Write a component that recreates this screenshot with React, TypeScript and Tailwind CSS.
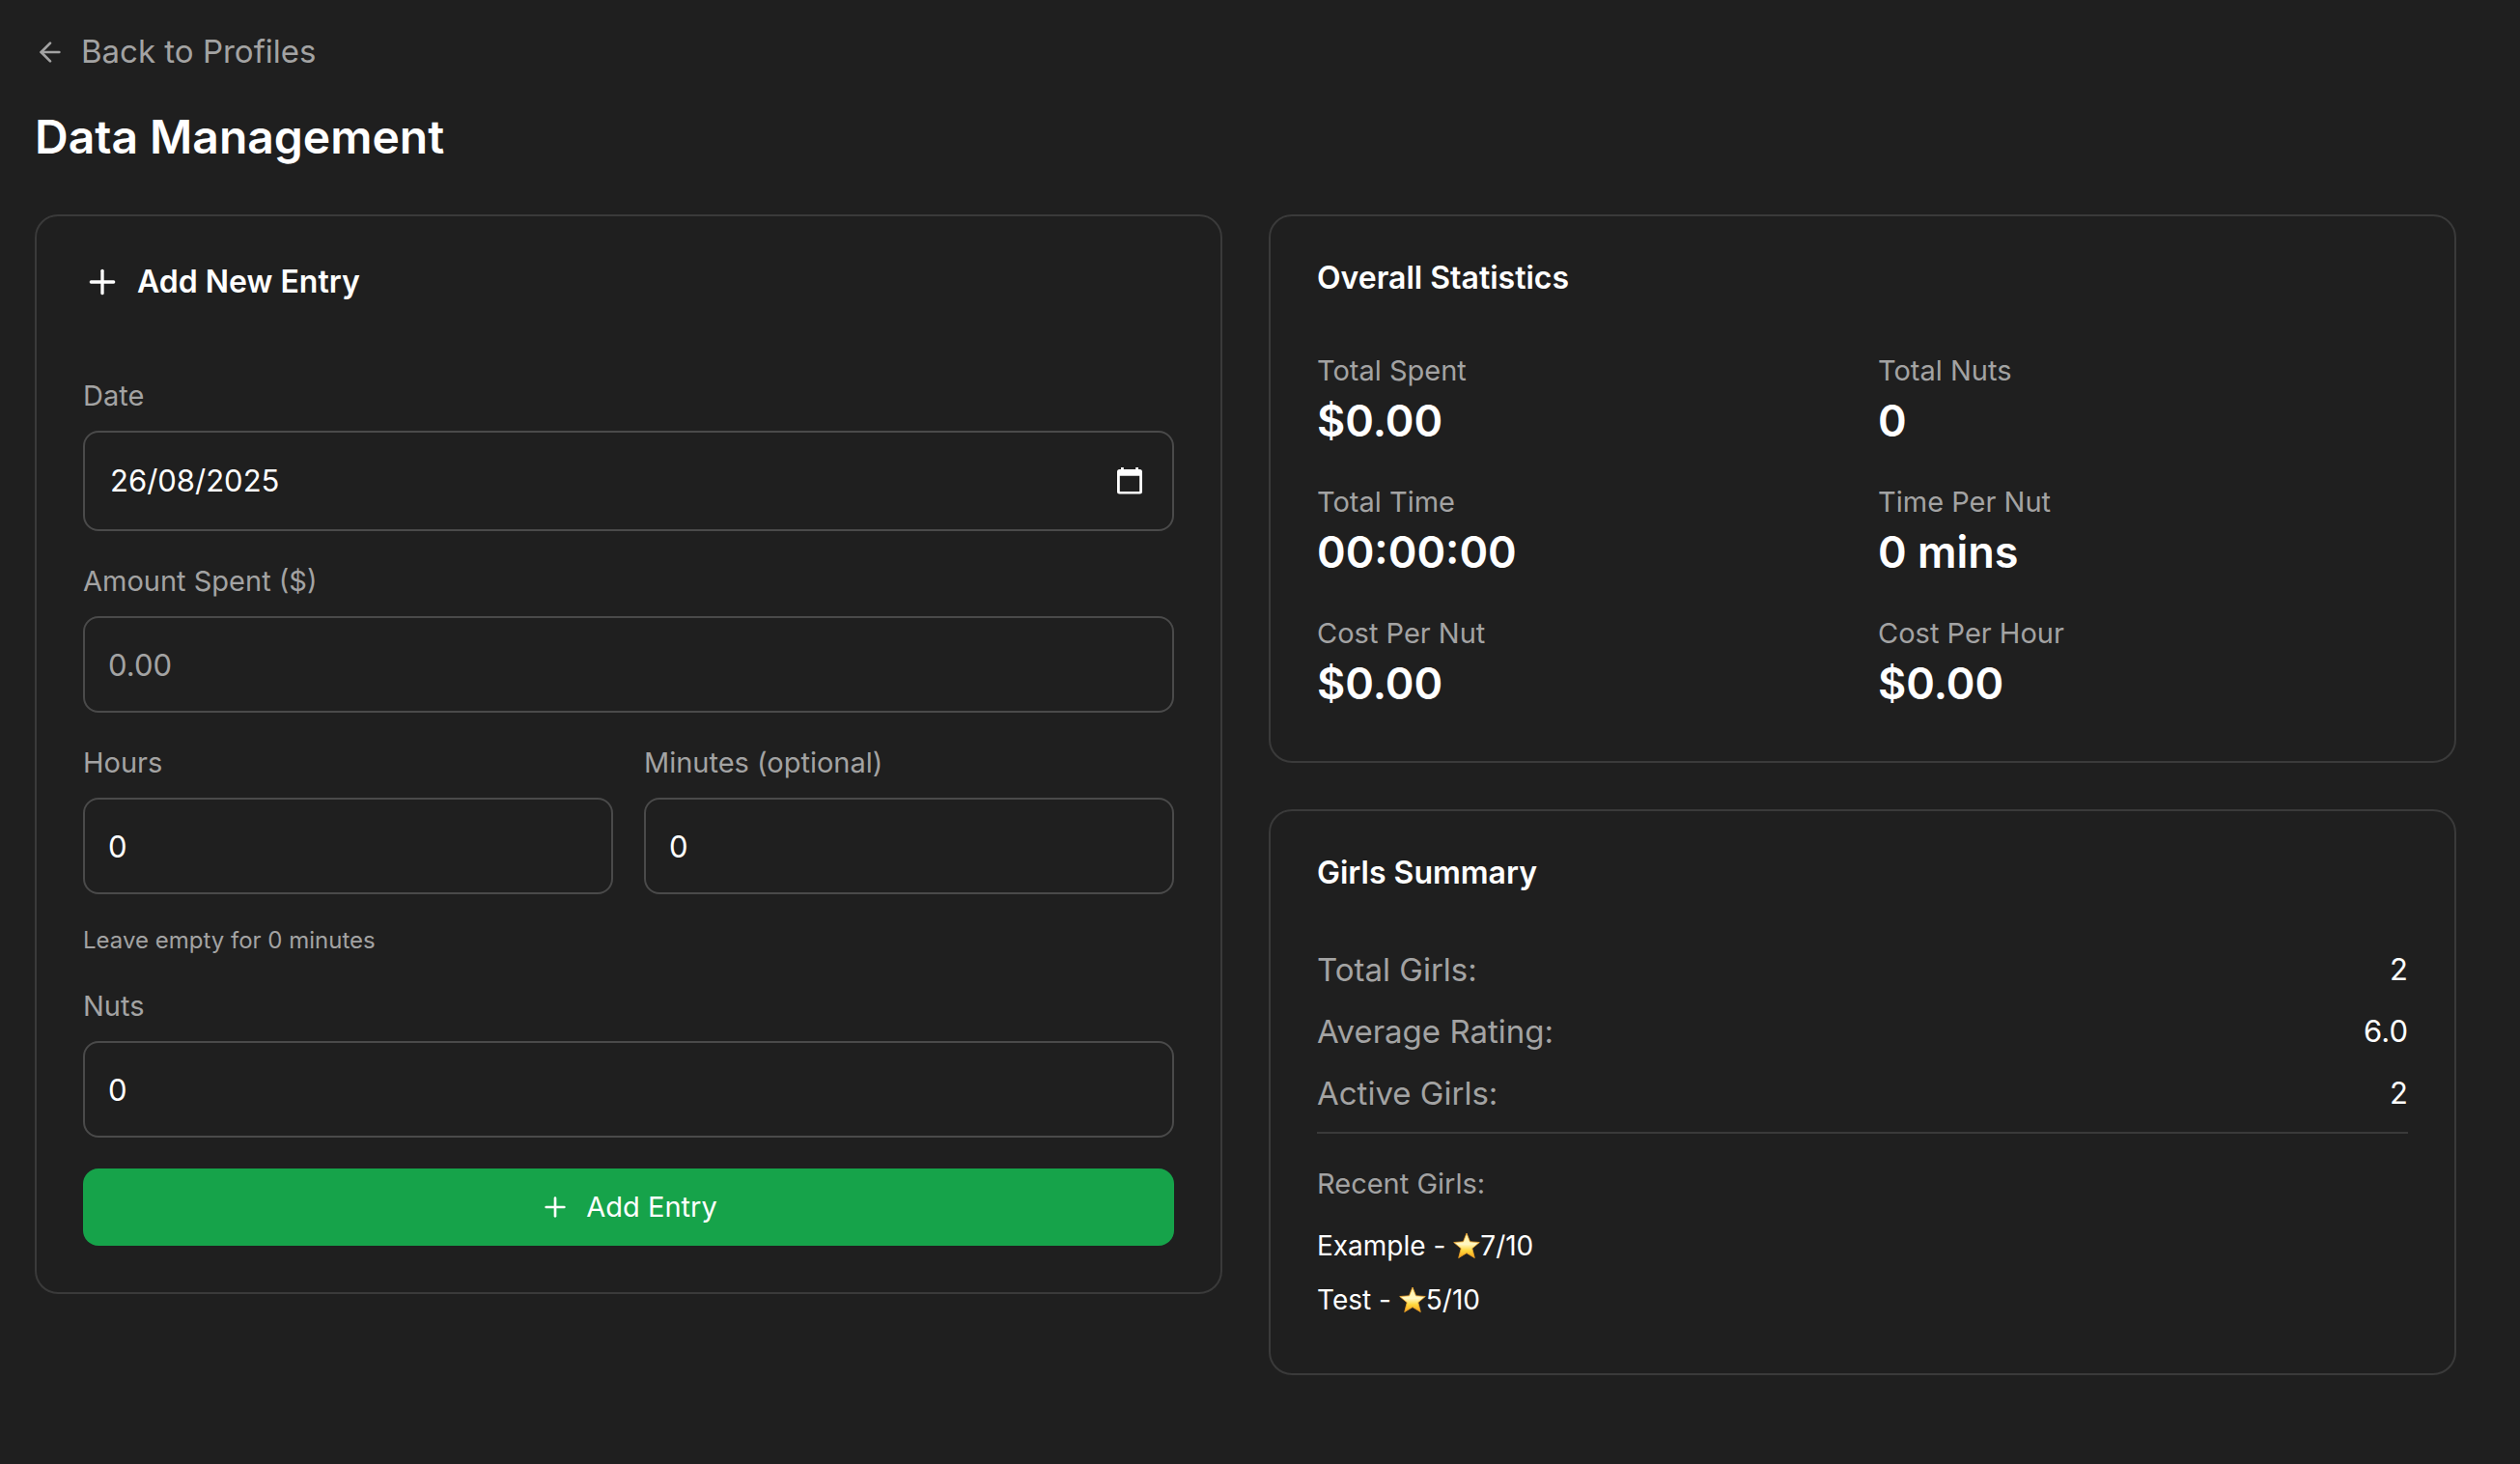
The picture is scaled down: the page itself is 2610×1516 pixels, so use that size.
import React, { useState } from "react";
import { ArrowLeft, Plus } from "lucide-react";

const stats = [
  { label: "Total Spent", value: "$0.00" },
  { label: "Total Nuts", value: "0" },
  { label: "Total Time", value: "00:00:00" },
  { label: "Time Per Nut", value: "0 mins" },
  { label: "Cost Per Nut", value: "$0.00" },
  { label: "Cost Per Hour", value: "$0.00" },
];

const summary = [
  { label: "Total Girls:", value: "2" },
  { label: "Average Rating:", value: "6.0" },
  { label: "Active Girls:", value: "2" },
];

const recent = [
  { name: "Example", rating: 7 },
  { name: "Test", rating: 5 },
];

function Card({ children }: { children: React.ReactNode }) {
  return (
    <section className="rounded-3xl border-2 border-[#3a3a3a] p-12">{children}</section>
  );
}

function CalendarIcon() {
  return (
    <svg width="28" height="28" viewBox="0 0 28 28" fill="currentColor" aria-hidden="true">
      <path
        fillRule="evenodd"
        d="M5 0h2.800v2h12.400V0H23v2h1.500A2.500 2.500 0 0 1 27 4.500V25a2.500 2.500 0 0 1-2.500 2.500h-21A2.500 2.500 0 0 1 1 25V4.500A2.500 2.500 0 0 1 3.500 2H5zM3.800 8.800V25h20.400V8.800z"
      />
    </svg>
  );
}

function Star() {
  return (
    <svg
      role="img"
      aria-label="star"
      className="mb-1 inline-block size-7 align-middle"
      viewBox="0 0 28 28"
    >
      <defs>
        <linearGradient id="star-fill" x1="0" y1="0" x2="0" y2="1">
          <stop offset="0" stopColor="#fff3a8" />
          <stop offset="0.45" stopColor="#fff7c2" />
          <stop offset="0.7" stopColor="#ffd83d" />
          <stop offset="1" stopColor="#f6a21a" />
        </linearGradient>
      </defs>
      <path
        d="M14 1 17.500 9.800 27.300 10.500 19.800 16.800 22.300 26.600 14 21.600 5.700 26.600 8.200 16.800 0.700 10.500 10.500 9.800Z"
        fill="url(#star-fill)"
        stroke="#f0a52a"
        strokeWidth="0.8"
        strokeLinejoin="round"
      />
    </svg>
  );
}

type FieldProps = {
  id: string;
  label: string;
  initial?: string;
  placeholder?: string;
};

const labelClass = "mb-4 block text-[29px] leading-10 text-[#a3a3a3]";
const inputClass =
  "block h-[100px] w-full rounded-2xl border-2 border-[#4a4a4a] bg-transparent px-6 text-[31px] text-white outline-none placeholder:text-[#a3a3a3]";

function Field({ id, label, initial = "", placeholder }: FieldProps) {
  const [value, setValue] = useState(initial);
  return (
    <div>
      <label htmlFor={id} className={labelClass}>
        {label}
      </label>
      <input
        id={id}
        type="text"
        inputMode="decimal"
        className={inputClass}
        value={value}
        placeholder={placeholder}
        onChange={(e) => setValue(e.target.value)}
      />
    </div>
  );
}

function DateField() {
  const [value, setValue] = useState("26/08/2025");
  return (
    <div>
      <label htmlFor="date" className={labelClass}>
        Date
      </label>
      <div className="flex h-[104px] items-center rounded-2xl border-2 border-[#4a4a4a] pr-[30px] pl-[26px]">
        <input
          id="date"
          type="text"
          className="min-w-0 flex-1 bg-transparent text-[31px] text-white outline-none"
          value={value}
          onChange={(e) => setValue(e.target.value)}
        />
        <button type="button" aria-label="Open calendar" className="text-white">
          <CalendarIcon />
        </button>
      </div>
    </div>
  );
}

export default function App() {
  return (
    <main className="min-h-screen bg-[#1f1f1f] pt-[30px] pr-[66px] pb-12 pl-9 font-['Inter',sans-serif] text-white">
      <a href="#profiles" className="inline-flex h-12 items-center gap-4 text-[33px] text-[#a3a3a3]">
        <ArrowLeft size={32} />
        Back to Profiles
      </a>
      <h1 className="mt-8 mb-12 text-5xl leading-[64px] font-semibold">Data Management</h1>

      <div className="grid grid-cols-2 items-start gap-12">
        <Card>
          <h2 className="mb-[78px] flex items-center gap-4 text-[32px] leading-10 font-semibold">
            <Plus size={40} />
            Add New Entry
          </h2>
          <form className="flex flex-col gap-8" onSubmit={(e) => e.preventDefault()}>
            <DateField />
            <Field id="amount" label="Amount Spent ($)" placeholder="0.00" />
            <div className="grid grid-cols-2 gap-8">
              <Field id="hours" label="Hours" initial="0" />
              <Field id="minutes" label="Minutes (optional)" initial="0" />
            </div>
            <p className="text-2xl text-[#a3a3a3]">Leave empty for 0 minutes</p>
            <Field id="nuts" label="Nuts" initial="0" />
            <button
              type="submit"
              className="flex h-20 items-center justify-center gap-4 rounded-2xl bg-[#16a34a] text-[29px]"
            >
              <Plus size={32} />
              Add Entry
            </button>
          </form>
        </Card>

        <div className="flex flex-col gap-12">
          <Card>
            <h2 className="mb-[60px] text-[32px] leading-8 font-semibold">Overall Statistics</h2>
            <dl className="grid grid-cols-2 gap-8">
              {stats.map((s) => (
                <div key={s.label}>
                  <dt className="text-[29px] leading-10 text-[#a3a3a3]">{s.label}</dt>
                  <dd className="text-[45px] leading-[64px] font-semibold">{s.value}</dd>
                </div>
              ))}
            </dl>
          </Card>

          <Card>
            <h2 className="mb-[60px] text-[32px] leading-8 font-semibold">Girls Summary</h2>
            <dl className="flex flex-col gap-4">
              {summary.map((s) => (
                <div key={s.label} className="flex justify-between text-[33px] leading-[48px]">
                  <dt className="text-[#a3a3a3]">{s.label}</dt>
                  <dd className="text-[31px]">{s.value}</dd>
                </div>
              ))}
            </dl>
            <div className="mt-4 border-t-2 border-[#3a3a3a] pt-8 text-[29px] leading-10">
              <h3 className="mb-4 text-[#a3a3a3]">Recent Girls:</h3>
              <ul className="text-[28px]">
                {recent.map((r) => (
                  <li key={r.name} className="py-2">
                    {r.name} - <Star />
                    {r.rating}/10
                  </li>
                ))}
              </ul>
            </div>
          </Card>
        </div>
      </div>
    </main>
  );
}
